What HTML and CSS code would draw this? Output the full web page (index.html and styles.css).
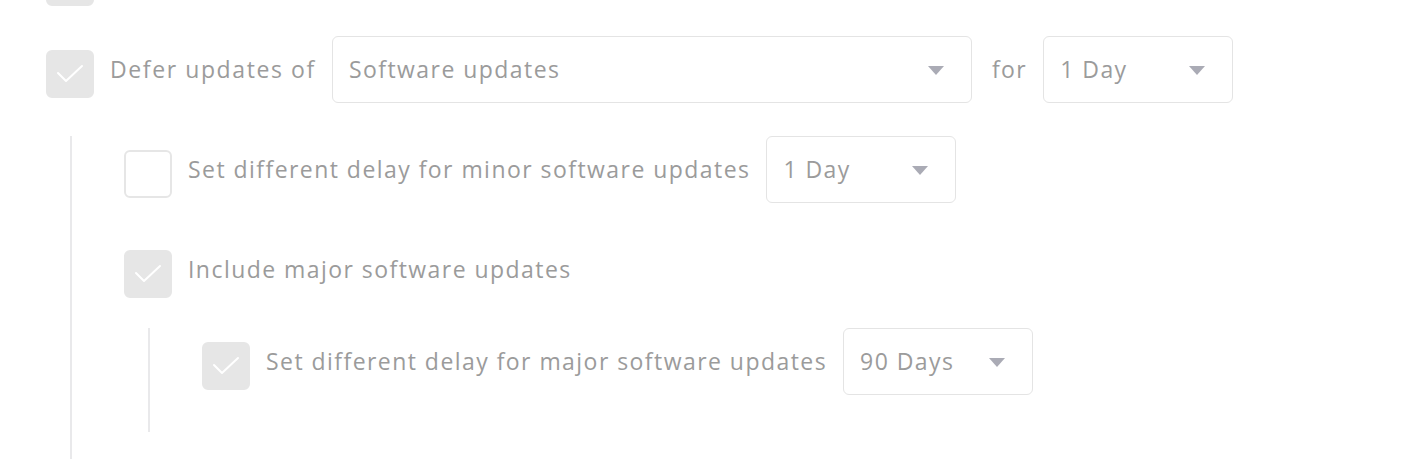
FILE: index.html
```html
<!DOCTYPE html>
<html lang="en">
<head>
<meta charset="utf-8">
<title>Defer updates</title>
<link rel="stylesheet" href="styles.css">
</head>
<body>
<div class="settings">
  <div class="row row-prev">
    <span class="cb cb-checked"></span>
  </div>

  <div class="row row-first">
    <span class="cb cb-checked"><svg viewBox="0 0 48 48"><path d="M12 23 L20 31 L36 16"/></svg></span>
    <span class="label label-defer">Defer updates of</span>
    <div class="select select-wide"><span class="select-text">Software updates</span><span class="caret"></span></div>
    <span class="label label-for">for</span>
    <div class="select"><span class="select-text">1 Day</span><span class="caret"></span></div>
  </div>

  <div class="group group-outer">
    <div class="row row-minor">
      <span class="cb"></span>
      <span class="label">Set different delay for minor software updates</span>
      <div class="select"><span class="select-text">1 Day</span><span class="caret"></span></div>
    </div>

    <div class="row row-major">
      <span class="cb cb-checked"><svg viewBox="0 0 48 48"><path d="M12 23 L20 31 L36 16"/></svg></span>
      <span class="label">Include major software updates</span>
    </div>

    <div class="group group-inner">
      <div class="row row-major-delay">
        <span class="cb cb-checked"><svg viewBox="0 0 48 48"><path d="M12 23 L20 31 L36 16"/></svg></span>
        <span class="label">Set different delay for major software updates</span>
        <div class="select"><span class="select-text">90 Days</span><span class="caret"></span></div>
      </div>
    </div>
  </div>
</div>
</body>
</html>
```

FILE: styles.css
```css
* { box-sizing: border-box; }

html, body {
  margin: 0;
  background: #ffffff;
}

body {
  font-family: "Open Sans", "Liberation Sans", sans-serif;
  font-size: 23px;
  letter-spacing: 1.45px;
  color: #9b9b9b;
  overflow: hidden;
}

.settings {
  padding-left: 46px;
}

.row {
  display: flex;
  align-items: center;
  gap: 16px;
  height: 67px;
}

.row-prev { margin-top: -56px; }
.row-first { margin-top: 25px; }

.cb {
  flex: none;
  width: 48px;
  height: 48px;
  margin-top: 8px;
  border-radius: 6px;
  border: 2px solid #e6e6e6;
  background: #ffffff;
  display: flex;
}

.cb-checked {
  background: #e6e6e6;
  border-color: #e6e6e6;
}

.cb svg {
  width: 48px;
  height: 48px;
  margin: -2px;
}

.cb svg path {
  fill: none;
  stroke: #ffffff;
  stroke-width: 2;
  stroke-linecap: round;
  stroke-linejoin: round;
}

.label {
  white-space: nowrap;
  line-height: 1;
  margin-top: -1px;
}

.label-defer {
  letter-spacing: 1.6px;
}

.label-for {
  margin-left: 4px;
}

.select {
  flex: none;
  width: 190px;
  height: 67px;
  border: 1px solid #e4e4e4;
  border-radius: 6px;
  display: flex;
  align-items: center;
  justify-content: space-between;
  padding: 0 27px 0 16px;
}

.select-wide {
  width: 640px;
}

.select-text {
  white-space: nowrap;
  margin-top: -1px;
}

.caret {
  width: 0;
  height: 0;
  border-left: 8px solid transparent;
  border-right: 8px solid transparent;
  border-top: 9px solid #aaabb5;
  margin-top: 2px;
}

.group {
  margin-left: 24px;
  border-left: 2px solid #e9e9eb;
  padding-left: 52px;
}

.group-outer {
  margin-top: 37px;
  padding-bottom: 27px;
}

.row-minor { margin-top: -4px; }
.row-major { margin-top: 33px; }

.group-inner {
  margin-top: 28px;
  padding-bottom: 37px;
}

.row-major-delay { margin-top: -3px; }
```
